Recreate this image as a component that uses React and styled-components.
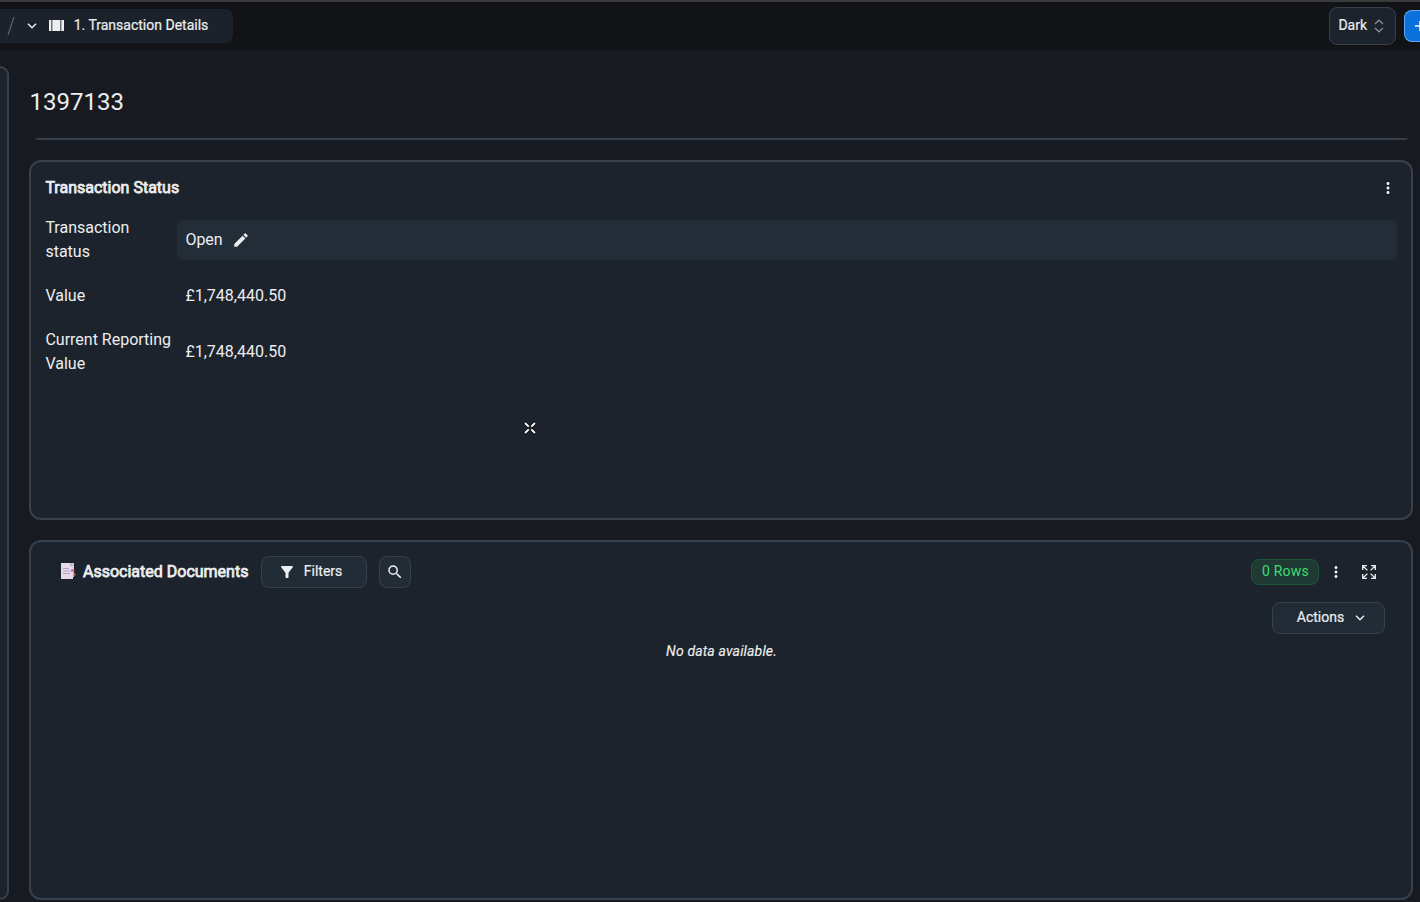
import styled, { createGlobalStyle } from 'styled-components';
import { MdEdit, MdFilterAlt, MdSearch, MdMoreVert } from 'react-icons/md';

const GlobalStyle = createGlobalStyle`
  * {
    box-sizing: border-box;
  }
  body {
    margin: 0;
    background: #171a21;
    color: #eceef0;
    font-family: Roboto, "Liberation Sans", sans-serif;
    font-size: 16px;
    overflow: hidden;
  }
  svg {
    display: block;
    flex-shrink: 0;
  }
`;

const Page = styled.div`
  width: 1420px;
  height: 902px;
  display: flex;
  flex-direction: column;
  overflow: hidden;
`;

const TopBar = styled.header`
  height: 50px;
  flex-shrink: 0;
  display: flex;
  align-items: flex-start;
  background: #111316;
  border-top: 2px solid #3b3b3e;
`;

const Crumb = styled.div`
  width: 233px;
  height: 34px;
  margin-top: 7px;
  padding-left: 6px;
  display: flex;
  align-items: center;
  background: #1c222b;
  border-radius: 0 8px 8px 0;
  font-size: 14px;
  line-height: 20px;
`;

const CrumbText = styled.span`
  margin: -2px 0 0 9.7px;
  -webkit-text-stroke: 0.2px currentColor;
`;

const ThemeSelect = styled.button`
  width: 67px;
  height: 38px;
  margin: 5px 8px 0 auto;
  padding: 0 10px 0 8.4px;
  display: flex;
  align-items: center;
  justify-content: space-between;
  background: #1d232c;
  border: 1px solid #363f4a;
  border-radius: 8px;
  color: inherit;
  font: 400 14px/20px Roboto, sans-serif;
  -webkit-text-stroke: 0.2px currentColor;

  span {
    margin-top: -2px;
  }
`;

const AddButton = styled.button`
  width: 16px;
  height: 32px;
  margin-top: 8px;
  padding: 0 0 0 9px;
  overflow: hidden;
  background: #0b72dc;
  border: 1px solid #5fa9f2;
  border-right: 0;
  border-radius: 8px 0 0 8px;
  color: #fff;
`;

const Body = styled.div`
  flex: 1;
  min-height: 0;
  display: flex;
  padding: 16px 7px 2px 0;
`;

const SidePanel = styled.aside`
  width: 9px;
  height: 834px;
  margin-right: 20px;
  background: #1d232c;
  border: 2px solid #36414d;
  border-left: 0;
  border-radius: 0 12px 12px 0;
`;

const Main = styled.main`
  flex: 1;
  display: flex;
  flex-direction: column;
  gap: 20px;
`;

const TitleBlock = styled.div`
  height: 74px;
  display: flex;
  flex-direction: column;
  justify-content: space-between;
`;

const PageTitle = styled.h1`
  margin: 0;
  padding: 20px 0 0 0.5px;
  font-size: 24px;
  font-weight: 400;
  line-height: 32px;
`;

const Divider = styled.div`
  height: 2px;
  margin: 0 5.5px;
  background: #36414d;
  border-radius: 0 0 6px 6px / 0 0 2px 2px;
`;

const Card = styled.section`
  height: 360px;
  padding: ${(p) => (p.$wide ? '14px 26px 0 29px' : '14px 14px 0 14.4px')};
  background: #1d232c;
  border: 2px solid #36414d;
  border-radius: 12px;
`;

const CardHeader = styled.div`
  height: ${(p) => p.$h}px;
  display: flex;
  align-items: center;
`;

const CardTitle = styled.h2`
  margin: 0 0 0 ${(p) => p.$ml || 0}px;
  font-size: 16px;
  font-weight: 400;
  line-height: 24px;
  -webkit-text-stroke: 0.75px currentColor;
`;

const IconButton = styled.span`
  width: ${(p) => p.$w || 18}px;
  margin-left: ${(p) => (p.$end ? 'auto' : 0)};
  display: flex;
  justify-content: center;
`;

const CrumbIcon = styled.span`
  margin: -1px 0 0 1px;
`;

const Fields = styled.dl`
  margin: 16px 0 0;
  display: grid;
  grid-template-columns: 131.6px 1fr;
  row-gap: 8px;
`;

const Label = styled.dt`
  min-height: 48px;
  display: flex;
  align-items: center;
  line-height: 24px;
`;

const Value = styled.dd`
  height: 40px;
  margin: 0;
  padding: 0 8.4px;
  align-self: center;
  display: flex;
  align-items: center;
  gap: 9.6px;
  background: ${(p) => (p.$editable ? '#232d38' : 'transparent')};
  border-radius: 6px;
  line-height: 24px;
`;

const Button = styled.button`
  width: ${(p) => p.$w}px;
  height: 32px;
  margin-left: ${(p) => p.$ml || 0}px;
  padding: 0 ${(p) => p.$pr || 0}px 0 ${(p) => p.$pl || 0}px;
  display: flex;
  align-items: center;
  justify-content: center;
  gap: ${(p) => p.$gap || 0}px;
  background: #222c37;
  border: 1px solid #36414d;
  border-radius: 8px;
  color: inherit;
  font: 400 14px/20px Roboto, sans-serif;
  -webkit-text-stroke: 0.2px currentColor;

  span {
    margin-top: -2px;
  }
`;

const RowsBadge = styled.span`
  width: 68px;
  height: 26px;
  margin-left: auto;
  padding: 0 0 2px 1px;
  display: flex;
  align-items: center;
  justify-content: center;
  background: #1e3a32;
  border: 1px solid #1d5336;
  border-radius: 8px;
  color: #3fdc75;
  font-size: 14px;
  letter-spacing: 0.2px;
`;

const ActionsRow = styled.div`
  display: flex;
  justify-content: flex-end;
  margin-top: 14px;
`;

const Empty = styled.p`
  margin: 7px 0 0 -2px;
  text-align: center;
  font-size: 14px;
  font-style: italic;
  line-height: 20px;
  letter-spacing: 0.16px;
  -webkit-text-stroke: 0.15px currentColor;
`;

// resize cursor, floats over the status card
const Pointer = styled.svg`
  position: absolute;
  left: 522px;
  top: 420px;
`;

const Chevron = () => (
  <svg width="10" height="6" viewBox="0 0 10 6" fill="none" stroke="currentColor" strokeWidth="1.4">
    <path d="M1 .8 5 4.8 9 .8" />
  </svg>
);

const SlashIcon = () => (
  <svg width="10" height="20" viewBox="0 0 10 20" fill="none" stroke="#5c6169" strokeWidth="1.2">
    <path d="M8 1 2 19" />
  </svg>
);

const CarouselIcon = () => (
  <svg width="15" height="11" viewBox="0 0 15 11" fill="currentColor">
    <path d="M0 0h2.4v11H0zM3.3 0h8.1v11H3.3zM12.3 0H15v11h-2.7z" />
  </svg>
);

const ExpandIcon = () => (
  <svg width="14" height="14" viewBox="0 0 14 14" fill="none" stroke="currentColor" strokeWidth="1.3">
    <path d="M.7 5V.7H5M1 1l4.4 4.4M9 .7h4.3V5M13 1 8.6 5.4M.7 9v4.3H5M1 13l4.4-4.4M9 13.3h4.3V9M13 13 8.6 8.6" />
  </svg>
);

const DocsIcon = () => (
  <svg width="16" height="18" viewBox="0 0 16 18">
    <path d="M3 0h11v14H3z" fill="#cbbdd4" />
    <path d="M1 0h9l3 3v13H1z" fill="#e5d9ec" />
    <path d="M10 0v3h3z" fill="#b8a9c5" />
    <path d="M3 5.5h6M3 8h7M3 10.5h7" stroke="#b5a7c0" />
    <path d="M11 6.5h3.5v2H11z" fill="#d6537f" />
    <path d="M13 10.5h2.5v2H13z" fill="#c68b45" />
  </svg>
);

function TransactionStatus() {
  return (
    <Card>
      <CardHeader $h={24}>
        <CardTitle>Transaction Status</CardTitle>
        <IconButton $end>
          <MdMoreVert size={18} />
        </IconButton>
      </CardHeader>
      <Fields>
        <Label>Transaction status</Label>
        <Value $editable>
          Open <MdEdit size={18} />
        </Value>
        <Label>Value</Label>
        <Value>£1,748,440.50</Value>
        <Label>Current Reporting Value</Label>
        <Value>£1,748,440.50</Value>
      </Fields>
    </Card>
  );
}

function AssociatedDocuments() {
  return (
    <Card $wide>
      <CardHeader $h={32}>
        <DocsIcon />
        <CardTitle $ml={7}>Associated Documents</CardTitle>
        <Button $w={106} $ml={12.6} $gap={8} $pr={8}>
          <MdFilterAlt size={18} />
          <span>Filters</span>
        </Button>
        <Button $w={32} $ml={12}>
          <MdSearch size={18} />
        </Button>
        <RowsBadge>0 Rows</RowsBadge>
        <IconButton $w={34}>
          <MdMoreVert size={18} />
        </IconButton>
        <IconButton $w={32}>
          <ExpandIcon />
        </IconButton>
      </CardHeader>
      <ActionsRow>
        <Button $w={113} $gap={11} $pl={5}>
          <span>Actions</span>
          <Chevron />
        </Button>
      </ActionsRow>
      <Empty>No data available.</Empty>
    </Card>
  );
}

function App() {
  return (
    <Page>
      <GlobalStyle />
      <TopBar>
        <Crumb>
          <SlashIcon />
          <IconButton $w={32}>
            <Chevron />
          </IconButton>
          <CrumbIcon>
            <CarouselIcon />
          </CrumbIcon>
          <CrumbText>1. Transaction Details</CrumbText>
        </Crumb>
        <ThemeSelect>
          <span>Dark</span>
          <svg width="12" height="14" viewBox="0 0 12 14" fill="none" stroke="#8a8f96" strokeWidth="1.2">
            <path d="M2 5 6 1.2 10 5M2 9l4 3.8L10 9" />
          </svg>
        </ThemeSelect>
        <AddButton>
          <svg width="12" height="12" viewBox="0 0 12 12" stroke="currentColor" strokeWidth="1.5">
            <path d="M6 1v10M1 6h10" />
          </svg>
        </AddButton>
      </TopBar>
      <Body>
        <SidePanel />
        <Main>
          <TitleBlock>
            <PageTitle>1397133</PageTitle>
            <Divider />
          </TitleBlock>
          <TransactionStatus />
          <AssociatedDocuments />
        </Main>
      </Body>
      <Pointer width="16" height="16" viewBox="0 0 16 16" fill="none">
        <path d="M2.5 2.5 6.5 6.5M13.5 2.5l-4 4M2.5 13.5l4-4M13.5 13.5l-4-4" stroke="#0b0d10" strokeWidth="3.6" />
        <path d="M3 3 6.7 6.7M13 3 9.3 6.7M3 13l3.7-3.7M13 13 9.3 9.3" stroke="#fff" strokeWidth="1.9" />
      </Pointer>
    </Page>
  );
}

export default App;
